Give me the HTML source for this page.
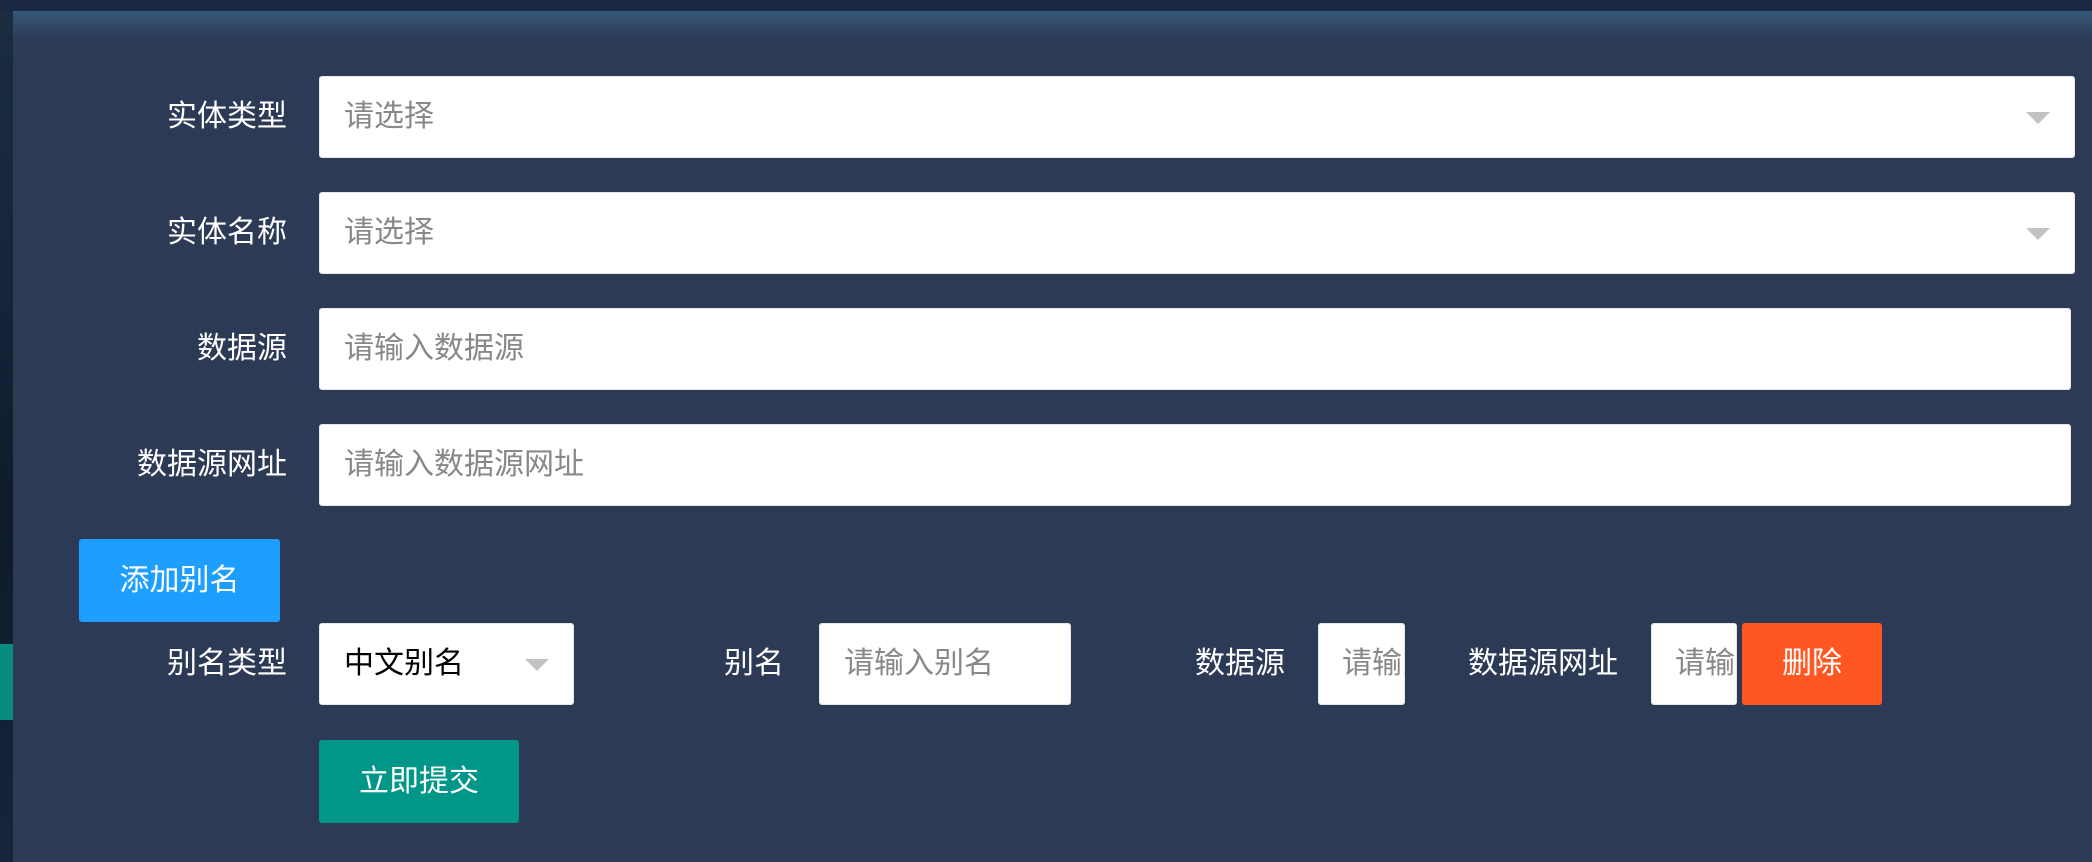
<!DOCTYPE html>
<html><head><meta charset="utf-8"><style>
*{margin:0;padding:0;box-sizing:border-box}
body{width:2092px;height:862px;overflow:hidden;background:#2d3a55;position:relative;font-family:"Liberation Sans","Noto Sans CJK SC",sans-serif;font-size:30px}
.top{position:absolute;left:0;top:0;width:2092px;height:11px;background:#1a2942}
.grad{position:absolute;left:13px;top:11px;width:2079px;height:30px;background:linear-gradient(#35587a,#2d3a55)}
.left{position:absolute;left:0;top:11px;width:13px;height:851px;background:linear-gradient(#1a2c40,#16253a 30%,#0f1b2a 60%,#15263a)}
.teal{position:absolute;left:0;top:644px;width:13px;height:76px;background:#0b8a7e}
.lbl{position:absolute;color:#fff;text-align:right;line-height:82px;height:82px}
.inp{position:absolute;background:#fff;border:1px solid #e6e6e6;border-radius:3px;color:#888;line-height:80px;padding-left:24px;overflow:hidden;white-space:nowrap}
.arr{position:absolute;right:24px;top:35px;width:0;height:0;border-left:12px solid transparent;border-right:12px solid transparent;border-top:12px solid #c2c2c2}
.btn{position:absolute;color:#fff;text-align:center;border-radius:3px;line-height:83px;height:83px}
</style></head><body>
<div class="top"></div><div class="grad"></div><div class="left"></div><div class="teal"></div>

<div class="lbl" style="left:0;width:287px;top:76px">实体类型</div>
<div class="inp" style="left:319px;top:76px;width:1756px;height:82px">请选择<span class="arr"></span></div>
<div class="lbl" style="left:0;width:287px;top:192px">实体名称</div>
<div class="inp" style="left:319px;top:192px;width:1756px;height:82px">请选择<span class="arr"></span></div>
<div class="lbl" style="left:0;width:287px;top:308px">数据源</div>
<div class="inp" style="left:319px;top:308px;width:1752px;height:82px">请输入数据源</div>
<div class="lbl" style="left:0;width:287px;top:424px">数据源网址</div>
<div class="inp" style="left:319px;top:424px;width:1752px;height:82px">请输入数据源网址</div>

<div class="btn" style="left:79px;top:539px;width:201px;background:#1e9fff">添加别名</div>

<div class="lbl" style="left:0;width:287px;top:623px">别名类型</div>
<div class="inp" style="left:319px;top:623px;width:255px;height:82px;color:#000">中文别名<span class="arr"></span></div>
<div class="lbl" style="left:700px;width:84px;top:623px">别名</div>
<div class="inp" style="left:819px;top:623px;width:252px;height:82px">请输入别名</div>
<div class="lbl" style="left:1150px;width:135px;top:623px">数据源</div>
<div class="inp" style="left:1318px;top:623px;width:87px;height:82px;padding-left:23px">请输入</div>
<div class="lbl" style="left:1440px;width:178px;top:623px">数据源网址</div>
<div class="inp" style="left:1651px;top:623px;width:86px;height:82px;padding-left:23px">请输入</div>
<div class="btn" style="left:1742px;top:623px;width:140px;height:82px;line-height:82px;background:#ff5722">删除</div>

<div class="btn" style="left:319px;top:740px;width:200px;background:#009688">立即提交</div>
</body></html>
